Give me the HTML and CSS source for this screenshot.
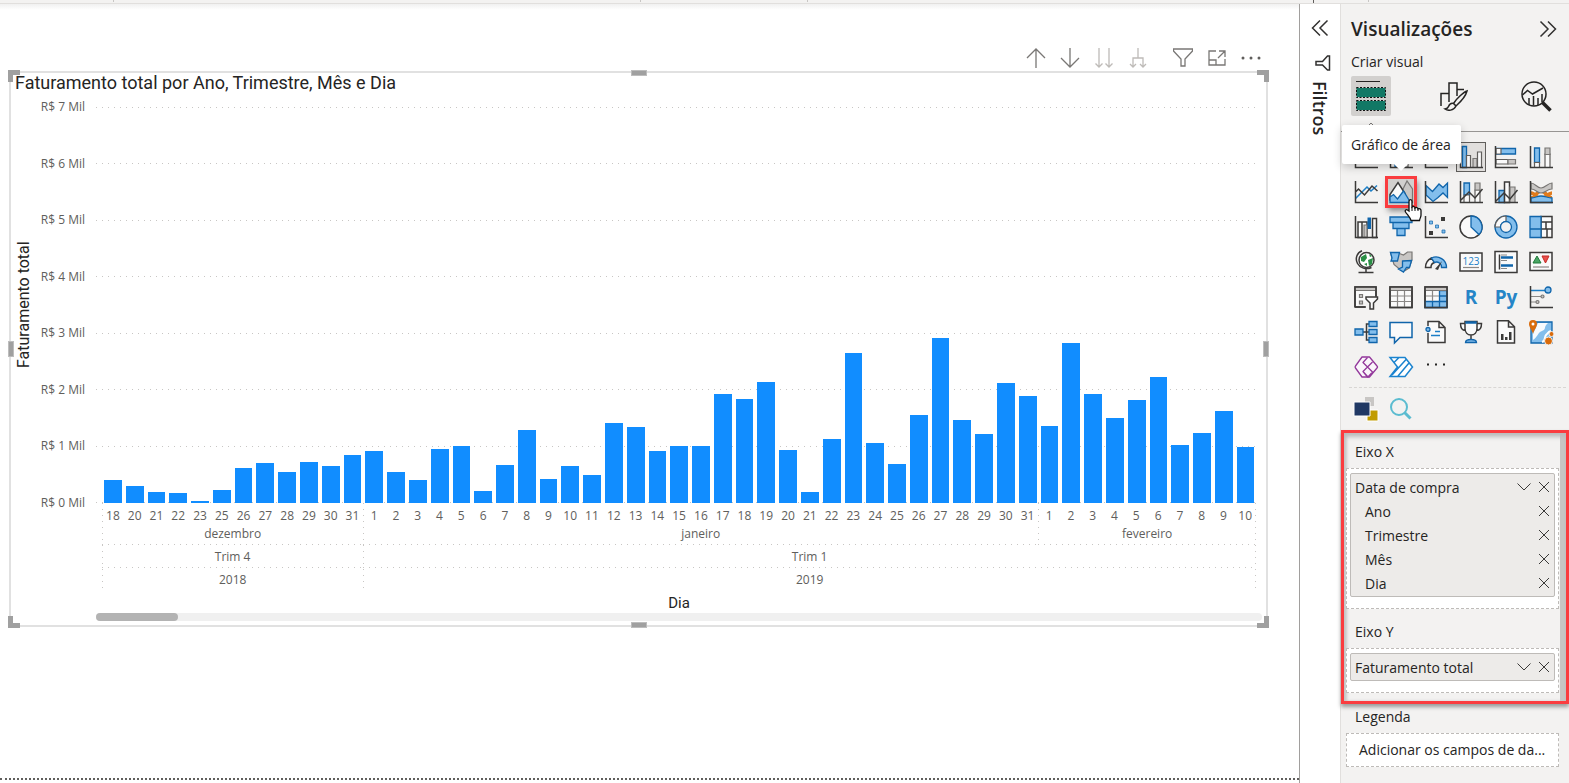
FILE: index.html
```html
<!DOCTYPE html>
<html lang="pt-BR">
<head>
<meta charset="utf-8">
<title>Faturamento total</title>
<link rel="stylesheet" href="styles.css">
</head>
<body>
<div class="ribbon"></div>
<div class="workspace">
  <main class="canvas">
    <div class="visual-tools">
      <button aria-label="Fazer drill up"><svg width="20" height="20" viewBox="0 0 20 20"><path d="M10 20V1M1 10l9-9 9 9"/></svg></button>
      <button aria-label="Fazer drill down"><svg width="20" height="20" viewBox="0 0 20 20"><path d="M10 0v19M1 10l9 9 9-9"/></svg></button>
      <button class="dim" aria-label="Próximo nível"><svg width="20" height="20" viewBox="0 0 20 20"><path d="M5 0v19M1.500 15.500L5 19l3.500-3.500M15 0v19M11.500 15.500L15 19l3.500-3.500"/></svg></button>
      <button class="dim" aria-label="Expandir tudo"><svg width="20" height="20" viewBox="0 0 20 20"><path d="M10 0v10M5 19v-9h10v9M2 16l3 3 3-3M12 16l3 3 3-3"/></svg></button>
      <button class="apart" aria-label="Filtros"><svg width="20" height="20" viewBox="0 0 20 20"><path d="M.5 1h19v2L12 11v7H8v-7L.5 3z"/></svg></button>
      <button aria-label="Modo de foco"><svg width="20" height="20" viewBox="0 0 20 20"><path d="M9 3H2v14h16v-6M2 12h7v5M12 3h6v6M18 3l-7 7"/></svg></button>
      <button aria-label="Mais opções"><svg width="20" height="20" viewBox="0 0 20 20"><g fill="#605e5c" stroke="none"><circle cx="2" cy="10" r="1.500"/><circle cx="10" cy="10" r="1.500"/><circle cx="18" cy="10" r="1.500"/></g></svg></button>
    </div>

    <section class="visual">
      <i class="handle tl"></i><i class="handle tc"></i><i class="handle tr"></i>
      <i class="handle ml"></i><i class="handle mr"></i>
      <i class="handle bl"></i><i class="handle bc"></i><i class="handle br"></i>
      <h1>Faturamento total por Ano, Trimestre, Mês e Dia</h1>
      <div class="chart">
        <div class="y-title">Faturamento total</div>
        <div class="y-labels">
          <span>R$ 7 Mil</span><span>R$ 6 Mil</span><span>R$ 5 Mil</span><span>R$ 4 Mil</span><span>R$ 3 Mil</span><span>R$ 2 Mil</span><span>R$ 1 Mil</span><span>R$ 0 Mil</span>
        </div>
        <div class="plot">
          <div class="grid-lines"><i></i><i></i><i></i><i></i><i></i><i></i><i></i><i></i></div>
          <div class="bars">
            <i style="--v:406"></i><i style="--v:300"></i><i style="--v:194"></i><i style="--v:180"></i><i style="--v:35"></i><i style="--v:230"></i><i style="--v:618"></i><i style="--v:707"></i><i style="--v:555"></i><i style="--v:724"></i><i style="--v:654"></i><i style="--v:848"></i>
            <i style="--v:920"></i><i style="--v:540"></i><i style="--v:406"></i><i style="--v:960"></i><i style="--v:1015"></i><i style="--v:212"></i><i style="--v:671"></i><i style="--v:1285"></i><i style="--v:430"></i><i style="--v:654"></i><i style="--v:495"></i><i style="--v:1413"></i><i style="--v:1350"></i><i style="--v:919"></i><i style="--v:1015"></i><i style="--v:1007"></i><i style="--v:1925"></i><i style="--v:1838"></i><i style="--v:2138"></i><i style="--v:942"></i><i style="--v:194"></i><i style="--v:1131"></i><i style="--v:2650"></i><i style="--v:1060"></i><i style="--v:689"></i><i style="--v:1563"></i><i style="--v:2915"></i><i style="--v:1467"></i><i style="--v:1219"></i><i style="--v:2125"></i><i style="--v:1885"></i>
            <i style="--v:1360"></i><i style="--v:2827"></i><i style="--v:1925"></i><i style="--v:1500"></i><i style="--v:1820"></i><i style="--v:2226"></i><i style="--v:1020"></i><i style="--v:1237"></i><i style="--v:1625"></i><i style="--v:989"></i>
          </div>
        </div>
        <div class="x-axis">
          <div class="year" style="--n:12">
            <div class="months">
              <div class="month" style="--n:12">
                <div class="days"><span>18</span><span>20</span><span>21</span><span>22</span><span>23</span><span>25</span><span>26</span><span>27</span><span>28</span><span>29</span><span>30</span><span>31</span></div>
                <div class="month-name">dezembro</div>
              </div>
            </div>
            <div class="level ruled">Trim 4</div>
            <div class="level">2018</div>
          </div>
          <div class="year" style="--n:41">
            <div class="months">
              <div class="month" style="--n:31">
                <div class="days"><span>1</span><span>2</span><span>3</span><span>4</span><span>5</span><span>6</span><span>7</span><span>8</span><span>9</span><span>10</span><span>11</span><span>12</span><span>13</span><span>14</span><span>15</span><span>16</span><span>17</span><span>18</span><span>19</span><span>20</span><span>21</span><span>22</span><span>23</span><span>24</span><span>25</span><span>26</span><span>27</span><span>28</span><span>29</span><span>30</span><span>31</span></div>
                <div class="month-name">janeiro</div>
              </div>
              <div class="month" style="--n:10">
                <div class="days"><span>1</span><span>2</span><span>3</span><span>4</span><span>5</span><span>6</span><span>7</span><span>8</span><span>9</span><span>10</span></div>
                <div class="month-name">fevereiro</div>
              </div>
            </div>
            <div class="level ruled">Trim 1</div>
            <div class="level">2019</div>
          </div>
        </div>
        <div class="x-title">Dia</div>
        <div class="scroll-track"><div class="scroll-thumb"></div></div>
      </div>
    </section>
    <div class="page-edge"></div>
  </main>

  <aside class="filters">
    <button aria-label="Expandir filtros"><svg width="18" height="18" viewBox="0 0 18 18"><path d="M9 1.500L1.500 9 9 16.500M16.500 1.500L9 9l7.500 7.500"/></svg></button>
    <svg class="funnel" width="16" height="16" viewBox="0 0 16 16"><path d="M14.500 1v14h-2L7.500 10H1V6.500h6.500L12.500 1z"/></svg>
    <h2>Filtros</h2>
  </aside>

  <aside class="pane">
    <header class="pane-head">
      <h2>Visualizações</h2>
      <button aria-label="Recolher"><svg width="18" height="18" viewBox="0 0 18 18"><path d="M1.500 1.500L9 9l-7.500 7.500M9 1.500L16.500 9 9 16.500"/></svg></button>
    </header>
    <h3>Criar visual</h3>
    <nav class="tabs">
      <button class="on" aria-label="Criar visual"><svg width="32" height="32" viewBox="0 0 32 32"><path d="M1 1.500h24" stroke="#252423"/><path d="M2 8.500h28v8H2zM2 21.500h28v8H2z" fill="#117865" stroke="#117865"/><path d="M1.500 7.500h29v10h-29zM1.500 20.500h29v10h-29z" fill="none" stroke="#111" stroke-dasharray="2 1.500"/></svg></button>
      <button aria-label="Formatar visual"><svg width="30" height="30" viewBox="0 0 30 30"><path d="M2 25V12.500h8M10 21V2h8v13M18 8.500h7" fill="none" stroke="#252423" stroke-width="1.500"/><path d="M28 10c-3 1-10 7-13.500 12.500l2.500 2.500C22 20.500 27 14 28 10zM14.500 22.500c-2-.5-4 .5-5 3-.5 1.500-1 2-3.500 2.500 3 2 8.500 2 11-3z" fill="#f3f2f1" stroke="#252423" stroke-width="1.500"/></svg></button>
      <button aria-label="Análise"><svg width="32" height="32" viewBox="0 0 32 32"><g fill="none" stroke="#252423" stroke-width="1.500"><circle cx="14" cy="14" r="12"/><path d="M2.500 15l5-4.500 5 3.500L23 8M9 25v-7M13.500 25.500V16M18 25v-7M22 22v-8"/></g><path d="M22.500 22.500l8 8" stroke="#252423" stroke-width="3.500"/></svg></button>
    </nav>
    <div class="tab-line"><svg width="10" height="6" viewBox="0 0 10 6"><path d="M1 6V5l4-4 4 4v1" fill="none" stroke="#797775"/></svg></div>

    <div class="gallery">
      <button aria-label="Barras empilhadas"><svg class="ico" viewBox="0 0 24 24"><path class="b" d="M2 4h14v5H2z"/><path class="w" d="M2 13h9v5H2z"/><path class="k" d="M1.500 1v21.500H24"/></svg></button>
      <button aria-label="Colunas empilhadas"><svg class="ico" viewBox="0 0 24 24"><path class="b" d="M6 8h5v14H6z"/><path class="w" d="M14 12h5v10h-5z"/><path class="k" d="M1.500 1v21.500H24"/></svg></button>
      <button aria-label="Barras clusterizadas"><svg class="ico" viewBox="0 0 24 24"><path class="b" d="M2 4h17v5H2z"/><path class="w" d="M2 11h14v6H2z"/><path class="k" d="M1.500 1v21.500H24"/></svg></button>
      <button class="on" aria-label="Colunas clusterizadas"><svg class="ico" viewBox="0 0 24 24"><path class="b" d="M3.500 1.500h4v21h-4z"/><path class="w" d="M7.500 10.500h4v12h-4z"/><path class="g" d="M14 13.500h4v9h-4z"/><path class="w" d="M18.500 7h4v15.500h-4z"/><path class="k" d="M1.500 1v21.500H24"/></svg></button>
      <button aria-label="Barras 100% empilhadas"><svg class="ico" viewBox="0 0 24 24"><path class="b" d="M2 3.500h19.500v5.500H2z"/><path class="w" d="M2 3.500h5v5.500H2zM2 14.500h12v4.500H2z"/><path class="g" d="M14 14.500h7.500v4.500H14z"/><path class="k" d="M1.500 1v21.500H24"/></svg></button>
      <button aria-label="Colunas 100% empilhadas"><svg class="ico" viewBox="0 0 24 24"><path class="b" d="M5.500 3h5v14.500h-5z"/><path class="w" d="M5.500 17.500h5v5h-5zM16 9h5v13.500h-5z"/><path class="g" d="M16 3h5v6.500h-5z"/><path class="k" d="M1.500 1v21.500H24"/></svg></button>

      <button aria-label="Gráfico de linhas"><svg class="ico" viewBox="0 0 24 24"><path class="bl" d="M1.500 18.500L13 7l4 4 6-5.500"/><path class="k" d="M1.500 1v21.500H24M1.500 12l3-3 6 6L18 6l5.500 5"/></svg></button>
      <button class="marked" aria-label="Gráfico de área"><svg class="ico" viewBox="0 0 24 24"><path class="g" d="M13 11l5-10 5.500 8v13.500H19z"/><path class="w dark" d="M1 20v-5.500L9 2.500l7 11-4 5z"/><path class="b" d="M1 22.500V17l3.500-2.500 4 4.500 6-8 7 11.500z"/></svg></button>
      <button aria-label="Área empilhada"><svg class="ico" viewBox="0 0 24 24"><path class="b" d="M2 5.500l6.500 6L15 4l4 3.500L23.500 3v14.500L19 13l-5 4.500-5 4-7-6.500z"/><path class="k" d="M1.500 1v21.500H24"/></svg></button>
      <button aria-label="Linhas e colunas empilhadas"><svg class="ico" viewBox="0 0 24 24"><path class="b" d="M5 3h5.500v12H5z"/><path class="w" d="M5 15h5.500v7.500H5zM16 10h5v12.500h-5z"/><path class="g" d="M16 3h5v7h-5z"/><path class="k" d="M1.500 1v21.500H24M2 20l8-8 6 6 7.500-9"/></svg></button>
      <button aria-label="Linhas e colunas clusterizadas"><svg class="ico" viewBox="0 0 24 24"><path class="b" d="M5 10.500h5.500v12H5z"/><path class="w dark" d="M10.500 2h5v20.500h-5z"/><path class="g" d="M16 7h5v15.500h-5z"/><path class="k" d="M1.500 1v21.500H24M2 21l8-8 6 6 7.500-9"/></svg></button>
      <button aria-label="Faixas"><svg class="ico" viewBox="0 0 24 24"><path d="M2 13c5 0 5 6 10 6s6-6 11-6M2 18c5 0 5-7 10-7s6 7 11 7" fill="none" stroke="#e07b1c" stroke-width="3.500"/><path class="g" d="M2 3c4 0 6 5 10 5s7-5 11-5v6c-5 0-7 4-11 4S7 9 2 9z"/><path class="b" d="M2 18c4 0 6-2 10-2s7 2 11 2v4.500H2z"/><path class="k" d="M1.500 1v21.500H24"/></svg></button>

      <button aria-label="Cascata"><svg class="ico" viewBox="0 0 24 24"><path class="w dark" d="M4 7h4v15.500H4zM8 7h5v15.500H8zM18.500 3.500h4v19h-4z"/><path class="g" d="M10 10h3v12h-3z"/><path class="solid" d="M13.500 2.500h3.500V14h-3.500z"/><path class="k" d="M1.500 1v21.500H24"/></svg></button>
      <button aria-label="Funil"><svg class="ico" viewBox="0 0 24 24"><path class="b" d="M1 2h22v5.500H1zM4 7.500h16v6H4zM8 13.500h8v7H8z"/></svg></button>
      <button aria-label="Dispersão"><svg class="ico" viewBox="0 0 24 24"><path d="M17 2h4v4h-4zM5 16h4v4H5z" fill="#3b3a39"/><path d="M5.500 6h3v3h-3zM11.500 10h3v3h-3zM18 15h3v3h-3z" fill="#83beec" stroke="#1065ab" stroke-width=".7"/><path class="k" d="M1.500 1v21.500H24"/></svg></button>
      <button aria-label="Pizza"><svg class="ico" viewBox="0 0 24 24"><circle class="w dark" cx="12" cy="12" r="11"/><path class="b" d="M12 1a11 11 0 0 1 8 18.500L12 12z"/></svg></button>
      <button aria-label="Rosca"><svg class="ico" viewBox="0 0 24 24"><circle class="b" cx="12" cy="12" r="11"/><path class="w" d="M12 1A11 11 0 0 0 1 12h5.500A5.500 5.500 0 0 1 12 6.500z"/><circle class="b hole" cx="12" cy="12" r="5.500"/></svg></button>
      <button aria-label="Treemap"><svg class="ico" viewBox="0 0 24 24"><path class="w dark" d="M12 1.500h11v21H12zM12 7h11M12 14h11M17 7v7M18 14v8"/><path class="b" d="M1 1.500h11v21H1zM1 14h11"/></svg></button>

      <button aria-label="Mapa"><svg class="ico" viewBox="0 0 24 24"><circle cx="12.500" cy="10" r="7.500" fill="#fff" stroke="#3b3a39" stroke-width="1.500"/><path d="M7 7l5-3 1 4-3 4-3-1zM14 10l5-2-1 6-3 2zM15 4l3 2-2 1zM10 14l3-1v3z" fill="#2a8f45"/><path class="k" d="M8 .8C2.500 3 1 9 3.500 13.500S12 20 17.500 17.500M12 19v3.500M4.500 22.500h15"/></svg></button>
      <button aria-label="Mapa preenchido"><svg class="ico" viewBox="0 0 24 24"><path class="g" d="M1.500 2.500l9 1 4 1.500 4-3 4.500 0v8l-3 8-4 2.500-5-1-6-5z"/><path class="b" d="M1.500 2.500l9 0-2 8.500H2l1-3zM13.500 11l9-.5-2 7h-3l-3 4.500-5-3 4-2z"/></svg></button>
      <button aria-label="Medidor"><svg class="ico" viewBox="0 0 24 24"><path class="w dark" d="M1.500 17.500a10.500 10.500 0 0 1 6-9.500l3 4.500a5 5 0 0 0-3.500 5z"/><path class="b" d="M7.500 8A10.500 10.500 0 0 1 22.500 17.500h-5a5 5 0 0 0-7-5z"/><path d="M11 19l7-8-4 9z" fill="#3b3a39"/></svg></button>
      <button aria-label="Cartão"><svg class="ico" viewBox="0 0 24 24"><path class="w dark" d="M1 3h22v18H1z"/><text x="12" y="15">123</text><path class="gl" d="M4 17.500h16"/></svg></button>
      <button aria-label="Cartão de várias linhas"><svg class="ico" viewBox="0 0 24 24"><path class="w dark" d="M1 1.500h22v21H1z"/><path class="k" d="M5.500 4.500v15"/><path class="gl" d="M7 5h6M7 10.500h6M7 18.500h6"/><path d="M7 7.500h12M7 15.500h12" stroke="#1065ab" stroke-width="2.500"/></svg></button>
      <button aria-label="KPI"><svg class="ico" viewBox="0 0 24 24"><path class="w dark" d="M1 2.500h22v18H1z"/><path d="M4 13l4-7 4 7z" fill="#4aa564" stroke="#1f7a3a"/><path d="M13 6h7l-3.500 7z" fill="#e8504c" stroke="#c42b26"/><path class="gl" d="M4 17h16"/></svg></button>

      <button aria-label="Segmentação"><svg class="ico" viewBox="0 0 24 24"><path class="w dark" d="M1 22V2h21v10M1 22h11"/><path class="g" d="M1 2h21v3.500H1zM5.500 9.500h3v3h-3zM5.500 16h3v3h-3z"/><path class="k" d="M11 22H1V2h21v9"/><path class="w dark" d="M12 12h11.500v2l-4 4v6h-3.500v-6l-4-4z"/></svg></button>
      <button aria-label="Tabela"><svg class="ico" viewBox="0 0 24 24"><path class="w dark" d="M1 2h22v20.500H1z"/><path class="gl" d="M1 11h22M1 16.500h22M8.500 5v17M15.500 5v17"/><path class="g" d="M1 2h22v3.500H1z"/><path class="k" d="M1 2h22v20.500H1z"/></svg></button>
      <button aria-label="Matriz"><svg class="ico" viewBox="0 0 24 24"><path class="w dark" d="M1 2h22v20.500H1z"/><path class="b" d="M15.500 5.500H23v17H1v-6h14.500zM8.500 16v6M15.500 16v6M15.500 11H23M15.500 16.500H23"/><path class="gl" d="M1 11h14M8.500 5v11"/><path class="g" d="M1 2h22v3.500H1z"/><path class="k" d="M1 2h22v20.500H1z"/></svg></button>
      <button class="word">R</button>
      <button class="word">Py</button>
      <button aria-label="Influenciadores"><svg class="ico" viewBox="0 0 24 24"><path class="bl" d="M2 5.500h14"/><circle class="b" cx="19" cy="5" r="3"/><path class="gl" d="M2 11.500h10M2 17h5"/><circle class="g" cx="13.500" cy="11.500" r="1.500"/><circle class="g" cx="8.500" cy="17" r="1.500"/><path class="k" d="M1.500 1v21.500H24"/></svg></button>

      <button aria-label="Árvore hierárquica"><svg class="ico" viewBox="0 0 24 24"><path class="k" d="M9 12h6M15 4h-2.500v16H15"/><path class="b" d="M1 9h8v6H1zM15 1.500h8v5h-8zM15 9.500h8v5h-8zM15 17.500h8v5h-8z"/></svg></button>
      <button aria-label="Perguntas e respostas"><svg class="ico" viewBox="0 0 24 24"><path class="w blue" d="M1 2.500h22v15H11L5.500 23v-5.500H1z"/></svg></button>
      <button aria-label="Narrativa"><svg class="ico" viewBox="0 0 24 24"><path class="w dark" d="M4 6V1.500h11l6 6v15H4V13M15 1.500v6h6"/><circle class="b" cx="4" cy="9.500" r="2"/><path class="bl" d="M11 11.500h5M7 15.500h9"/></svg></button>
      <button aria-label="Metas"><svg class="ico" viewBox="0 0 24 24"><path class="w dark" d="M6 1.500h12v7c0 4-2.500 6.500-6 6.500s-6-2.500-6-6.500zM6 3.500H1.500c0 4 1.500 7 5 7M18 3.500h4.500c0 4-1.500 7-5 7M12 15v5"/><path class="b" d="M6.500 22.500c0-2 2-3 5.500-3s5.500 1 5.500 3zM7 2h10v1H7z"/></svg></button>
      <button aria-label="Relatório paginado"><svg class="ico" viewBox="0 0 24 24"><path class="w dark" d="M3.500 .8h11l6 6V23h-17zM14.500 1v6h6"/><path d="M7 20v-6h2.500v6zM11 20v-3h2.500v3zM15 20v-8h2.500v8z" fill="#3b3a39"/></svg></button>
      <button aria-label="ArcGIS"><svg class="ico" viewBox="0 0 24 24"><path class="b" d="M2 2h21v21H2z"/><path d="M9 3h10c-5 4-1 6-6 8s-4 6-9 9V14z" fill="#f7fafd"/><path d="M13 22c4-1 2-5 4-7s2-3 5-4" fill="none" stroke="#fff" stroke-width="2"/><path d="M0 4a4 4 0 0 1 8 0c0 3-3 6-4 10C3 10 0 7 0 4z" fill="#d96b0b"/><circle cx="4" cy="4" r="1.500" fill="#fff"/><circle cx="19.500" cy="21" r="4" fill="#d96b0b" stroke="#f3f2f1"/><circle cx="22.500" cy="14" r="2.500" fill="#d96b0b" stroke="#f3f2f1"/></svg></button>

      <button aria-label="Power Apps"><svg class="ico" viewBox="0 0 24 24"><g fill="#faf5fb" stroke="#93379b" stroke-width="1.300" stroke-linejoin="round"><path d="M8 2h7.500L23 11c.7.700.7 1.300 0 2l-7.500 9H8L1.500 13c-.6-.7-.6-1.300 0-2z"/><path d="M13.500 2.500L9 7.500l4.500 4.500 5-5M9 16.500l4.500-4.500 5 5-4.500 5zM13.500 12L9 7.500M9 16.500l4.500 5.500" fill="none"/></g></svg></button>
      <button aria-label="Power Automate"><svg class="ico" viewBox="0 0 24 24"><path d="M1 2.500h15l7.500 9.500-7.500 9.500H1L8.500 12zM3 20L17.500 4M9 21L20 8M5 7.500l5-5" fill="#fff" stroke="#1a83cf" stroke-width="1.500"/></svg></button>
      <button aria-label="Obter mais visuais"><svg class="ico" viewBox="0 0 24 24"><path d="M3 8.500h2v2H3zM11 8.500h2v2h-2zM19 8.500h2v2h-2z" fill="#252423"/></svg></button>
      <div class="tooltip" role="tooltip">Gráfico de área</div>
      <svg class="pointer" width="20" height="24" viewBox="0 0 20 24"><path d="M5 13V3.500c0-2.500 3-2.500 3 0V9c1-1 3-.5 3 1 1-1 3-.5 3 1 1.500-.8 3 0 3 1.500V17c0 2-1 3-1.500 5.500H7C6 19 3.500 17 1.500 14c-1-1.500 1-3 2-2z" fill="#fff" stroke="#111" stroke-width="1.300"/><path d="M8 9v4M11 10v3M14 11v2" stroke="#111"/></svg>
    </div>

    <div class="gallery extra">
      <button aria-label="Visual personalizado"><svg class="ico" viewBox="0 0 24 24"><path d="M11 0h9v9h-9z" fill="#c8c6c4"/><path d="M13 13h11v11H13z" fill="#c19c00" stroke="#fff"/><path d="M0 5h16v14H0z" fill="#203864" stroke="#fff"/></svg></button>
      <button aria-label="Pesquisa"><svg class="ico" viewBox="0 0 24 24"><circle cx="10" cy="10" r="8" fill="none" stroke="#5bbcd0" stroke-width="2"/><path d="M15.500 15.500l6 6" stroke="#5bbcd0" stroke-width="3"/></svg></button>
    </div>

    <div class="wells marked-area">
      <h4>Eixo X</h4>
      <div class="well">
        <ul class="field">
          <li><span>Data de compra</span><button aria-label="Opções"><svg width="14" height="10" viewBox="0 0 14 10"><path d="M.5 1.500L7 8l6.500-6.500"/></svg></button><button aria-label="Remover"><svg width="12" height="12" viewBox="0 0 12 12"><path d="M1 1l10 10M11 1L1 11"/></svg></button></li>
          <li class="sub"><span>Ano</span><button aria-label="Remover"><svg width="12" height="12" viewBox="0 0 12 12"><path d="M1 1l10 10M11 1L1 11"/></svg></button></li>
          <li class="sub"><span>Trimestre</span><button aria-label="Remover"><svg width="12" height="12" viewBox="0 0 12 12"><path d="M1 1l10 10M11 1L1 11"/></svg></button></li>
          <li class="sub"><span>Mês</span><button aria-label="Remover"><svg width="12" height="12" viewBox="0 0 12 12"><path d="M1 1l10 10M11 1L1 11"/></svg></button></li>
          <li class="sub"><span>Dia</span><button aria-label="Remover"><svg width="12" height="12" viewBox="0 0 12 12"><path d="M1 1l10 10M11 1L1 11"/></svg></button></li>
        </ul>
      </div>
      <h4>Eixo Y</h4>
      <div class="well">
        <ul class="field">
          <li><span>Faturamento total</span><button aria-label="Opções"><svg width="14" height="10" viewBox="0 0 14 10"><path d="M.5 1.500L7 8l6.500-6.500"/></svg></button><button aria-label="Remover"><svg width="12" height="12" viewBox="0 0 12 12"><path d="M1 1l10 10M11 1L1 11"/></svg></button></li>
        </ul>
      </div>
    </div>
    <div class="wells last">
      <h4>Legenda</h4>
      <div class="well empty">Adicionar os campos de da...</div>
    </div>
  </aside>
</div>
</body>
</html>
```
FILE: styles.css
```css
* { box-sizing: border-box; }
html, body { height: 100%; }
body {
  margin: 0;
  display: flex;
  flex-direction: column;
  overflow: hidden;
  background: #fff;
  color: #252423;
  font-family: "Segoe UI", "Open Sans", "Noto Sans", sans-serif;
  font-size: 14px;
}
h1, h2, h3, h4, ul { margin: 0; padding: 0; font-weight: 400; }
ul { list-style: none; }
button { border: 0; padding: 0; background: none; font: inherit; color: inherit; display: flex; align-items: center; justify-content: center; }
svg { display: block; }
i { display: block; }

.ribbon {
  height: 4px;
  flex: none;
  border-bottom: 1px solid #e1dfdd;
  background:
    linear-gradient(#c8c6c4, #c8c6c4) 113px 0 / 1px 2px no-repeat,
    linear-gradient(#c8c6c4, #c8c6c4) 640px 0 / 1px 2px no-repeat,
    linear-gradient(#c8c6c4, #c8c6c4) 807px 0 / 1px 2px no-repeat,
    linear-gradient(#605e5c, #605e5c) 1313px 0 / 1px 3px no-repeat,
    linear-gradient(#c8c6c4, #c8c6c4) 1368px 0 / 1px 2px no-repeat,
    #f3f2f1;
}
.workspace { flex: 1; min-height: 0; display: flex; }

/* report canvas */
.canvas {
  flex: 1;
  min-width: 0;
  display: flex;
  flex-direction: column;
  padding: 42px 31px 0 9px;
  background: linear-gradient(#f0f0f0, #fff 6px);
}
.visual-tools { display: flex; justify-content: flex-end; gap: 14px; padding: 2px 7px 3px 0; }
.visual-tools svg { fill: none; stroke: #797775; stroke-width: 1.3; }
.visual-tools .dim svg { stroke: #bebbb8; }
.visual-tools .apart { margin-left: 11px; }

.visual { position: relative; border: 2px solid #e1e1e1; padding: 0 4px 4px; }
.visual h1 { font-family: Roboto, sans-serif; font-size: 18px; line-height: 20px; }
.handle { position: absolute; background: #a0a0a0; border: 1px solid #bdbdbd; }
.tc, .bc { width: 16px; height: 6px; left: 50%; margin-left: -8px; }
.ml, .mr { width: 6px; height: 16px; top: 50%; margin-top: -8px; }
.tl, .tr, .bl, .br { width: 12px; height: 12px; background: none; border: 0 solid #a0a0a0; }
.tl { border-width: 5px 0 0 5px; }
.tr { border-width: 5px 5px 0 0; }
.bl { border-width: 0 0 5px 5px; }
.br { border-width: 0 5px 5px 0; }
.tl, .tc, .tr { top: -3px; }
.bl, .bc, .br { bottom: -3px; }
.tl, .ml, .bl { left: -3px; }
.tr, .mr, .br { right: -3px; }

.chart {
  display: grid;
  grid-template-columns: 18px 52px 11px 1fr;
  color: #605e5c;
  font-size: 12px;
  padding-top: 5px;
}
.y-title {
  grid-area: 1 / 1 / 2 / 2;
  writing-mode: vertical-rl;
  transform: rotate(180deg);
  text-align: center;
  font-family: Roboto, sans-serif;
  font-size: 16px;
  line-height: 18px;
  color: #252423;
}
.y-labels {
  grid-area: 1 / 2 / 2 / 3;
  display: flex;
  flex-direction: column;
  justify-content: space-between;
  text-align: right;
  line-height: 18px;
}
.plot { grid-area: 1 / 4 / 2 / 5; display: grid; padding: 9px 4px 9px 0; height: 414px; }
.grid-lines { grid-area: 1 / 1; display: flex; flex-direction: column; justify-content: space-between; }
.grid-lines i { height: 1px; background: repeating-linear-gradient(90deg, #c8c6c4 0 1px, transparent 1px 6px); }
.bars { grid-area: 1 / 1; display: flex; align-items: flex-end; padding: 0 2px 0 6px; min-height: 0; }
.bars i {
  flex: 1;
  height: calc(var(--v) / 7000 * 100%);
  border: 2px solid transparent;
  border-width: 0 2px;
  background: #118dff padding-box;
}

.x-axis {
  grid-area: 2 / 4 / 3 / 5;
  display: flex;
  margin: -9px 6px 0;
  text-align: center;
  background: repeating-linear-gradient(#c8c6c4 0 1px, transparent 1px 6px) right / 1px 100% no-repeat;
}
.year, .month {
  flex: var(--n) 1 0;
  min-width: 0;
  background: repeating-linear-gradient(#c8c6c4 0 1px, transparent 1px 6px) left / 1px 100% no-repeat;
}
.months { display: flex; }
.days { display: flex; padding-top: 4px; line-height: 18px; }
.days span { flex: 1 1 0; min-width: 0; }
.month-name { height: 20px; line-height: 17px; }
.month-name, .ruled { background: repeating-linear-gradient(90deg, #c8c6c4 0 1px, transparent 1px 6px) bottom / 100% 1px no-repeat; }
.level { line-height: 23px; }
.x-title { grid-area: 3 / 4 / 4 / 5; text-align: center; color: #252423; font-family: Roboto, sans-serif; font-size: 15px; line-height: 19px; padding-top: 3px; }
.scroll-track { grid-area: 4 / 4 / 5 / 5; height: 8px; border-radius: 4px; background: #f0f0f0; }
.scroll-thumb { width: 7%; height: 8px; border-radius: 4px; background: #b3b3b3; }
.page-edge { margin: auto -31px 3px -9px; border-top: 2px dotted #605e5c; }

/* collapsed filter pane */
.filters {
  flex: none;
  width: 42px;
  display: flex;
  flex-direction: column;
  align-items: center;
  border-left: 1px solid #a19f9d;
  border-right: 1px solid #e1dfdd;
  padding-top: 15px;
}
.filters svg, .pane-head svg { fill: none; stroke: #323130; stroke-width: 1.5; }
.funnel { margin: 18px 0 10px 6px; }
.filters h2 { writing-mode: vertical-rl; font-size: 18px; line-height: 24px; font-weight: 600; }

/* visualizations pane */
.pane { flex: none; width: 228px; background: #f3f2f1; display: flex; flex-direction: column; }
.pane-head { display: flex; justify-content: space-between; align-items: center; height: 48px; padding: 2px 12px 0 10px; }
.pane-head h2 { font-size: 19px; font-weight: 600; }
.pane h3 { font-size: 14px; line-height: 20px; padding-left: 10px; font-weight: 500; }
.tabs { display: flex; justify-content: space-between; padding: 4px 13px 0 10px; }
.tabs button { width: 40px; height: 40px; border-radius: 2px; }
.tabs .on { background: #d2d0ce; }
.tab-line { height: 16px; border-bottom: 1px solid #979593; padding: 6px 0 0 25px; }

.gallery {
  position: relative;
  display: grid;
  grid-template-columns: repeat(6, 30px);
  gap: 5px;
  margin: 0 3px 0 8px;
  padding: 10px 0 5px 2px;
  border-bottom: 1px dashed #d8d6d4;
}
.gallery button { height: 30px; }
.gallery .on { outline: 1px solid #605e5c; outline-offset: -1px; background: #e1dfdd; }
.gallery .marked { outline: 3px solid #fa3c3f; outline-offset: -2px; background: #d2d0ce; box-shadow: 2px 4px 6px #888; }
.gallery .word { font-size: 19px; font-weight: 700; color: #2585c7; }
.gallery.extra { padding: 6px 0 6px 2px; border: 0; }
.ico { width: 24px; height: 24px; overflow: visible; }
.k { fill: none; stroke: #3b3a39; stroke-width: 1.5; }
.w { fill: #fafafa; stroke: #605e5c; stroke-width: 1.2; }
.dark { stroke: #3b3a39; stroke-width: 1.5; }
.blue { stroke: #1065ab; stroke-width: 1.5; }
.b { fill: #83beec; stroke: #1065ab; stroke-width: 1.3; }
.hole { fill: #f3f2f1; }
.solid { fill: #1065ab; }
.g { fill: #c8c6c4; stroke: #797775; stroke-width: 1.2; }
.gl { fill: none; stroke: #8a8886; stroke-width: 1.2; }
.bl { fill: none; stroke: #1c7fc7; stroke-width: 1.5; }
.ico text { font-size: 10px; text-anchor: middle; fill: #1c7fc7; }
.tooltip {
  position: absolute;
  left: -7px;
  top: -7px;
  padding: 0 10px 0 9px;
  line-height: 39px;
  white-space: nowrap;
  background: #fff;
  border-radius: 2px;
  box-shadow: 0 3px 10px rgba(0, 0, 0, .2);
}
.tooltip::after { content: ""; position: absolute; left: 52px; top: 39px; border: 7px solid transparent; border-top-color: #fff; border-bottom: 0; }
.pointer { position: absolute; left: 55px; top: 66px; }

.wells { padding: 0 10px 0 5px; }
.wells h4 { line-height: 20px; padding-left: 9px; }
.marked-area {
  padding: 9px 7px 8px 2px;
  border: 3px solid #fa3c3f;
  box-shadow: 0 3px 4px #999, inset 0 4px 4px #bbb, inset -6px 0 0 #c8c6c4, inset 3px 0 3px #ccc;
}
.marked-area .well + h4 { margin-top: 13px; }
.well { margin-top: 6px; background: #fff; border: 1px dashed #bebbb8; padding: 4px 3px 11px; }
.field { background: #edebe9; border: 1px solid #bebbb8; border-radius: 2px; padding: 1px 4px; }
.field li { display: flex; align-items: center; gap: 7px; height: 24px; }
.field span { flex: 1; }
.field svg { fill: none; stroke: #3b3a39; }
.field .sub { padding-left: 10px; }
.last { padding-top: 3px; }
.empty { padding: 0 4px 0 12px; line-height: 32px; white-space: nowrap; }
```
